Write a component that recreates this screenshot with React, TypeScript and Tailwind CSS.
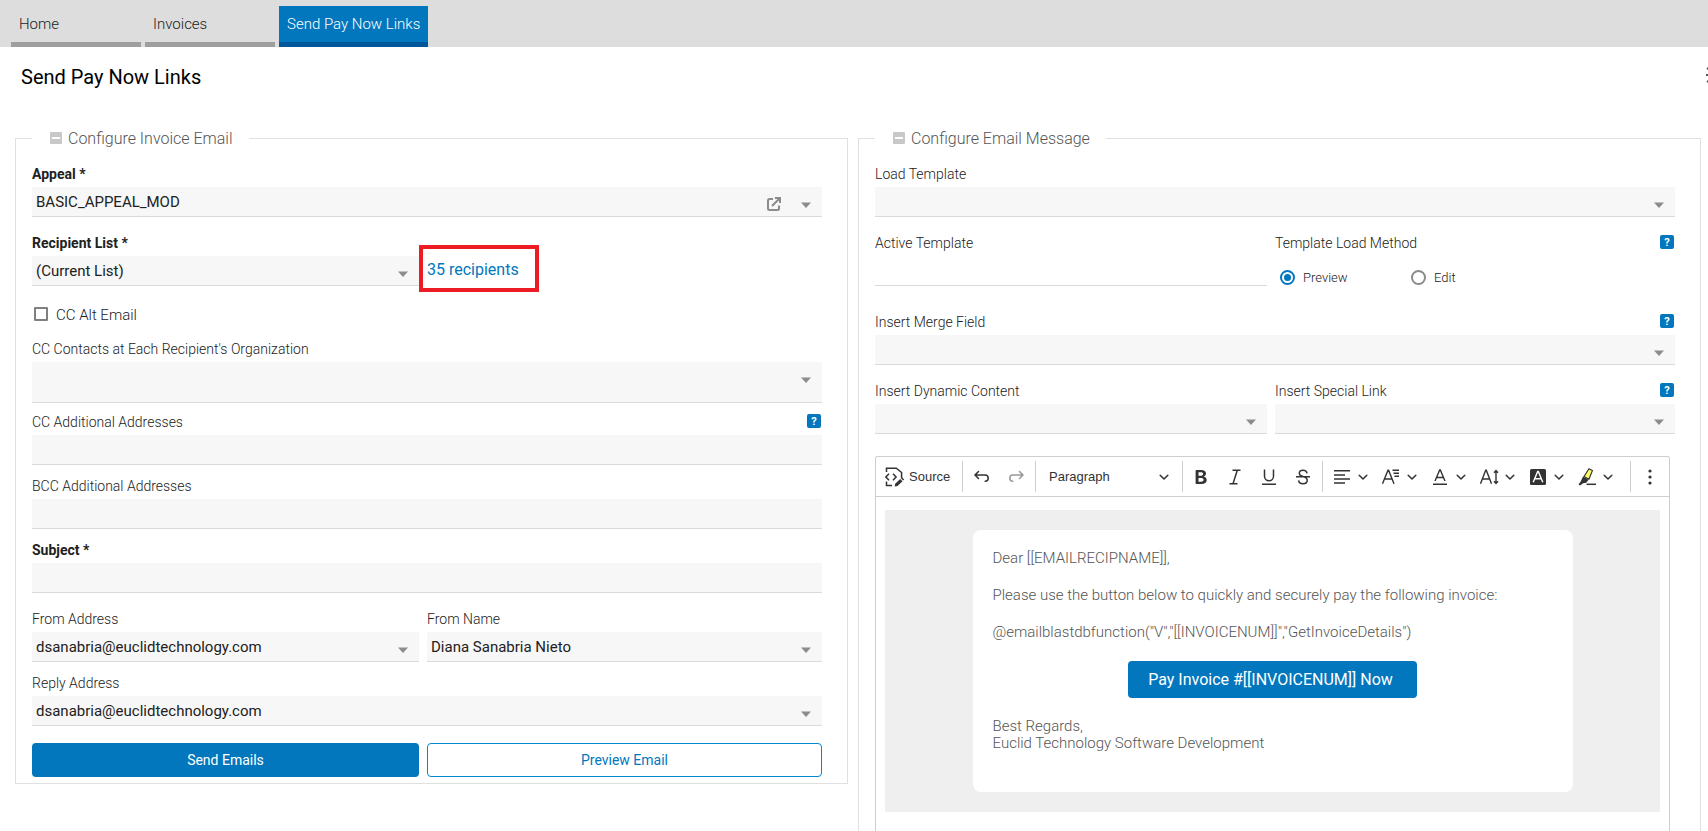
import { useId, useState, type ReactNode } from "react";

function Caret() {
  return (
    <svg viewBox="0 0 10 6" className="pointer-events-none absolute right-[11px] top-[15px] h-1.5 w-2.5" aria-hidden="true">
      <path d="M0 0.5h10L5 6z" fill="#8c8c8c" />
    </svg>
  );
}

function Help({ topic }: { topic: string }) {
  return (
    <button
      type="button"
      aria-label={"Help: " + topic}
      className="mr-px flex h-3.5 w-3.5 items-center justify-center rounded-xs bg-[#0277bd] text-[11px] font-bold leading-none text-white"
    >
      ?
    </button>
  );
}

function Caption({ id, text, bold, help }: { id: string; text: string; bold?: boolean; help?: boolean }) {
  return (
    <div className="flex h-5 items-center justify-between">
      <label htmlFor={id} className={(bold ? "font-bold" : "font-light") + " pt-0.5 text-sm text-[#212121]"}>
        {text}
      </label>
      {help && <Help topic={text} />}
    </div>
  );
}

type FieldProps = { label: string; bold?: boolean; help?: boolean };

function SelectField({ label, bold, help, value = "", tall, action }: FieldProps & { value?: string; tall?: boolean; action?: ReactNode }) {
  const id = useId();
  return (
    <div className="flex min-w-0 flex-col gap-1">
      <Caption id={id} text={label} bold={bold} help={help} />
      <div className="relative">
        <select
          id={id}
          className={
            (tall ? "h-[41px]" : "h-[30px]") +
            " block w-full appearance-none border-b border-[#dadada] bg-[#f7f7f7] px-1 pt-0.5 text-[15px] text-[#212121] outline-none"
          }
        >
          <option>{value}</option>
        </select>
        {action}
        <Caret />
      </div>
    </div>
  );
}

function TextField({ label, bold, help, plain }: FieldProps & { plain?: boolean }) {
  const id = useId();
  return (
    <div className="flex min-w-0 flex-col gap-1">
      <Caption id={id} text={label} bold={bold} help={help} />
      <input
        id={id}
        type="text"
        readOnly={plain}
        className={
          (plain ? "bg-white" : "bg-[#f7f7f7]") +
          " block h-[30px] w-full border-b border-[#dadada] px-1 pt-0.5 text-[15px] text-[#212121] outline-none"
        }
      />
    </div>
  );
}

function PanelLegend({ children }: { children: string }) {
  return (
    <legend className="h-6 pl-[18px] pr-4">
      <button type="button" className="flex h-6 items-center gap-1.5 text-base font-light text-[#555]">
        <svg viewBox="0 0 12 12" className="h-3 w-3" aria-hidden="true">
          <rect width="12" height="12" rx="1" fill="#c8c8c8" />
          <rect x="2" y="5" width="8" height="2" fill="#fff" />
        </svg>
        <span className="pt-0.5">{children}</span>
      </button>
    </legend>
  );
}

function Icon({ children }: { children: ReactNode }) {
  return (
    <svg viewBox="0 0 20 20" className="h-5 w-5 shrink-0" fill="#333" aria-hidden="true">
      {children}
    </svg>
  );
}

function Chevron() {
  return (
    <svg viewBox="0 0 10 10" className="h-2.5 w-2.5 shrink-0" aria-hidden="true">
      <path d="M1.2 3.2 5 7l3.8-3.8" fill="none" stroke="#333" strokeWidth="1.5" strokeLinecap="round" strokeLinejoin="round" />
    </svg>
  );
}

function Tool({ label, children }: { label: string; children: ReactNode }) {
  return (
    <button type="button" aria-label={label} className="flex h-[30px] w-[34px] items-center justify-center">
      {children}
    </button>
  );
}

function DropTool({ label, children }: { label: string; children: ReactNode }) {
  return (
    <button type="button" aria-label={label} className="flex h-[30px] w-[49px] items-center gap-1.5 pl-1.5">
      {children}
      <Chevron />
    </button>
  );
}

function Divider() {
  return <span className="h-[31px] w-px shrink-0 bg-[#ccced1]" />;
}

function Toolbar() {
  return (
    <div role="toolbar" aria-label="Editor toolbar" className="flex h-10 items-center border-b border-[#ccced1] text-[#333]">
      <button type="button" className="flex h-[30px] w-[86px] items-center gap-1 pl-[9px] font-['Liberation_Sans',sans-serif] text-[13px]">
        <Icon>
          <path d="M1.5 5V1.2h9.8L16.6 5.5v5.5" fill="none" stroke="#333" strokeWidth="1.5" />
          <path d="M1.5 14.5v4H7" fill="none" stroke="#333" strokeWidth="1.5" />
          <path d="M4 6.8.9 10 4 13.2M8 6.8 11.1 10 8 13.2" fill="none" stroke="#333" strokeWidth="1.5" />
          <path d="m16.9 10.2 2.3 2.2-1 1.1-2.3-2.3zM15.2 11.9l2.3 2.3-5 4.9-2.8.5.5-2.8z" />
        </Icon>
        Source
      </button>
      <Divider />
      <div className="flex w-[72px] items-center justify-center">
        <Tool label="Undo">
          <Icon>
            <path d="M6.5 4.500 3 8l3.5 3.5M3 8h10a3.2 3.200 0 0 1 3.2 3.200c0 1.700-1.200 3-3 3.100" fill="none" stroke="#333" strokeWidth="1.5" strokeLinecap="round" />
          </Icon>
        </Tool>
        <Tool label="Redo">
          <Icon>
            <path d="M13.5 4.500 17 8l-3.5 3.5M17 8H7a3.200 3.200 0 0 0-3.200 3.200c0 1.700 1.200 3 3 3.100" fill="none" stroke="#999" strokeWidth="1.5" strokeLinecap="round" />
          </Icon>
        </Tool>
      </div>
      <Divider />
      <button type="button" className="flex h-[30px] w-[146px] items-center justify-between px-[13px] font-['Liberation_Sans',sans-serif] text-[13px]">
        Paragraph
        <Chevron />
      </button>
      <Divider />
      <div className="flex w-[139px] items-center pl-px">
        <Tool label="Bold">
          <Icon>
            <path d="M10.200 17H5.300a.7.7 0 0 1-.7-.7V3.700c0-.4.3-.7.7-.7h4.800c3.100 0 4.900 1.400 4.900 3.600 0 1.500-1 2.600-2.300 3 1.800.3 3 1.700 3 3.400 0 2.500-2 4-5.500 4zM7.500 5.300v3.500h2c1.700 0 2.600-.6 2.600-1.800 0-1.100-.8-1.700-2.200-1.700zm0 5.600v3.800h2.400c1.800 0 2.700-.7 2.700-1.900 0-1.300-1-1.900-2.900-1.900z" />
          </Icon>
        </Tool>
        <Tool label="Italic">
          <Icon>
            <path d="M7.500 3.300h8M4.500 16.700h8M12.300 3.300 8 16.700" fill="none" stroke="#333" strokeWidth="1.500" />
          </Icon>
        </Tool>
        <Tool label="Underline">
          <Icon>
            <path d="M5.500 2.500v6.800a4.500 4.500 0 0 0 9 0V2.500M3 17.300h14" fill="none" stroke="#333" strokeWidth="1.500" />
          </Icon>
        </Tool>
        <Tool label="Strikethrough">
          <Icon>
            <path d="M14 6.300C13.700 4.300 12.200 3.200 10 3.200S6.300 4.400 6.300 6.300c0 1.800 1.300 2.700 3.700 3.300 2.800.7 4.200 1.600 4.200 3.700 0 2.200-1.700 3.500-4.200 3.500-2.600 0-4.200-1.300-4.400-3.400M3 9.800h14" fill="none" stroke="#333" strokeWidth="1.500" />
          </Icon>
        </Tool>
      </div>
      <Divider />
      <div className="flex flex-1 items-center pl-[3px]">
        <DropTool label="Text alignment">
          <Icon>
            <path d="M2 3.800h16M2 7.900h11M2 12h16M2 16.100h11" fill="none" stroke="#333" strokeWidth="1.500" />
          </Icon>
        </DropTool>
        <DropTool label="Font family">
          <Icon>
            <path d="M1.500 16.700 7 3.300h.6l5.400 13.400M3.500 12h7.500M11.500 3.300H18M12.500 6.300H18M13.500 9.300H18" fill="none" stroke="#333" strokeWidth="1.400" />
          </Icon>
        </DropTool>
        <DropTool label="Font color">
          <Icon>
            <path d="m5 14 4.700-11h.6L15 14M6.500 10.500h7M3 17.300h14" fill="none" stroke="#333" strokeWidth="1.400" />
          </Icon>
        </DropTool>
        <DropTool label="Font size">
          <Icon>
            <path d="M1.500 16.700 6.700 3.300h.6l5.200 13.400M3.500 12h7M17 4v12M15 5.800l2-2.300 2 2.300M15 14.200l2 2.300 2-2.300" fill="none" stroke="#333" strokeWidth="1.400" />
          </Icon>
        </DropTool>
        <DropTool label="Font background color">
          <Icon>
            <rect x="2" y="2" width="16" height="16" rx="1.500" />
            <path d="M5.200 15.300 9.700 4.500h.6l4.500 10.800M6.700 11.800h6.600" fill="none" stroke="#fff" strokeWidth="1.400" />
          </Icon>
        </DropTool>
        <DropTool label="Highlight">
          <Icon>
            <path d="m7 9.500 5-7.800 3.400 1.900-3.500 8.700z" fill="#fdfd66" stroke="#333" strokeWidth="1.200" strokeLinejoin="round" />
            <path d="m6 9.500 5.600 3.200-2.400 3.100-3 .4-3.200 2.400-1.500-1 2.200-3z" />
            <path d="M9.500 17.300h9.500" stroke="#333" strokeWidth="1.500" />
          </Icon>
        </DropTool>
      </div>
      <Divider />
      <button type="button" aria-label="Show more items" className="flex h-[30px] w-[38px] items-center justify-center">
        <Icon>
          <circle cx="10" cy="4" r="1.600" />
          <circle cx="10" cy="10" r="1.600" />
          <circle cx="10" cy="16" r="1.600" />
        </Icon>
      </button>
    </div>
  );
}

function LoadMethod() {
  const [method, setMethod] = useState("Preview");
  return (
    <div role="radiogroup" aria-label="Template Load Method" className="flex min-w-0 flex-col gap-1">
      <div className="flex h-5 items-center justify-between text-sm font-light text-[#212121]">
        <span className="pt-0.5">Template Load Method</span>
        <Help topic="Template Load Method" />
      </div>
      <div className="flex h-[42px] items-center pl-[5px]">
        {["Preview", "Edit"].map((name) => (
          <label key={name} className="flex w-[131px] items-center gap-2 text-[13px] font-light text-[#212121]">
            <input
              type="radio"
              name="load-method"
              checked={method === name}
              onChange={() => setMethod(name)}
              className="h-[15px] w-[15px] appearance-none rounded-full border-2 border-[#8a8a8a] p-0.5 checked:border-[#0277bd] checked:bg-[#0277bd] checked:bg-clip-content"
            />
            <span className="pt-0.5">{name}</span>
          </label>
        ))}
      </div>
    </div>
  );
}

export default function App() {
  return (
    <div className="flex h-screen flex-col overflow-hidden bg-white font-[Roboto,sans-serif]">
      <nav className="flex h-[47px] shrink-0 items-end gap-1 bg-[#ddd] pl-[11px] text-[15px] font-light">
        <a href="#home" className="flex h-[41px] w-[130px] items-center border-b-[5px] border-[#9e9e9e] px-2 text-[#212121]">
          Home
        </a>
        <a href="#invoices" className="flex h-[41px] w-[130px] items-center border-b-[5px] border-[#9e9e9e] px-2 text-[#212121]">
          Invoices
        </a>
        <a href="#send" aria-current="page" className="flex h-[41px] items-center border-b-[5px] border-[#01579b] bg-[#0277bd] px-2 text-white">
          Send Pay Now Links
        </a>
      </nav>

      <header className="flex h-[79px] shrink-0 items-start justify-between overflow-hidden pl-[21px] pt-4">
        <h1 className="text-xl leading-7 text-black">Send Pay Now Links</h1>
        <button type="button" aria-label="Page settings" className="-mr-4 mt-[3px] h-[18px] w-[18px]">
          <svg viewBox="0 0 18 18" fill="none" stroke="#555" strokeWidth="2" aria-hidden="true">
            <circle cx="9" cy="9" r="5" />
            <path d="M0 9h4M14 9h4M9 0v4M9 14v4M1 2l4 3M13 13l3 3M1 16l4-3M13 5l3-3" />
          </svg>
        </button>
      </header>

      <main className="grid min-h-0 flex-1 grid-cols-[833fr_843fr] gap-2.5 pl-[15px] pr-[7px]">
        <fieldset className="min-w-0 self-start border border-[#e0e0e0] pb-1.5 pl-4 pr-[25px] pt-[13px]">
          <PanelLegend>Configure Invoice Email</PanelLegend>
          <div className="flex flex-col gap-[15px]">
            <SelectField
              label="Appeal *"
              bold
              value="BASIC_APPEAL_MOD"
              action={
                <button type="button" aria-label="Open appeal" className="absolute right-[41px] top-2.5 h-3.5 w-3.5">
                  <svg viewBox="0 0 14 14" fill="none" stroke="#8c8c8c" strokeWidth="2" aria-hidden="true">
                    <path d="M6 2H2.500A1.500 1.500 0 0 0 1 3.500v8A1.500 1.500 0 0 0 2.500 13h8a1.500 1.500 0 0 0 1.500-1.500V8.500M5 9l7.500-7.500M8 1h5v5" />
                  </svg>
                </button>
              }
            />
            <div className="grid grid-cols-[387fr_395fr] gap-2">
              <SelectField label="Recipient List *" bold value="(Current List)" />
              <div className="flex items-end">
                <a
                  href="#recipients"
                  className="-mb-1.5 -ml-2 flex h-[47px] w-[120px] items-center border-4 border-[#ed1c24] pl-1 pt-0.5 text-base text-[#0277bd]"
                >
                  35 recipients
                </a>
              </div>
            </div>
          </div>
          <label className="mb-3.5 mt-[18px] flex h-5 items-center gap-2 pl-0.5 text-[15px] font-light text-[#212121]">
            <input type="checkbox" className="h-3.5 w-3.5 appearance-none rounded-[1px] border-2 border-[#808080] checked:bg-[#0277bd]" />
            <span className="pt-0.5">CC Alt Email</span>
          </label>
          <div className="flex flex-col gap-2">
            <SelectField label="CC Contacts at Each Recipient's Organization" tall />
            <div className="flex flex-col gap-2.5">
              <TextField label="CC Additional Addresses" help />
              <TextField label="BCC Additional Addresses" />
              <TextField label="Subject *" bold />
            </div>
          </div>
          <div className="mt-[15px] flex flex-col gap-2.5">
            <div className="grid grid-cols-[387fr_395fr] gap-2">
              <SelectField label="From Address" value="dsanabria@euclidtechnology.com" />
              <SelectField label="From Name" value="Diana Sanabria Nieto" />
            </div>
            <SelectField label="Reply Address" value="dsanabria@euclidtechnology.com" />
          </div>
          <div className="mt-[17px] grid grid-cols-[387fr_395fr] gap-2 text-sm">
            <button type="button" className="h-[34px] rounded bg-[#0277bd] text-white">
              Send Emails
            </button>
            <button type="button" className="h-[34px] rounded border border-[#0288d1] bg-white text-[#0277bd]">
              Preview Email
            </button>
          </div>
        </fieldset>

        <fieldset className="min-w-0 border border-b-0 border-[#e0e0e0] pl-4 pr-[25px] pt-[13px]">
          <PanelLegend>Configure Email Message</PanelLegend>
          <div className="flex flex-col gap-[15px]">
            <SelectField label="Load Template" />
            <div className="grid h-16 grid-cols-[392fr_400fr] gap-2">
              <TextField label="Active Template" plain />
              <LoadMethod />
            </div>
            <SelectField label="Insert Merge Field" help />
            <div className="grid grid-cols-[392fr_400fr] gap-2">
              <SelectField label="Insert Dynamic Content" />
              <SelectField label="Insert Special Link" help />
            </div>
          </div>
          <div className="mr-[5px] mt-[22px] min-h-[400px] rounded-t-xs border border-[#ccced1]">
            <Toolbar />
            <div className="mx-[9px] mt-[13px] bg-[#efefef] py-5">
              <div className="mx-auto flex h-[262px] max-w-[600px] flex-col rounded-lg bg-white p-5 text-[15px] font-light leading-[17px] text-[#555]">
                <p className="mb-5">Dear [[EMAILRECIPNAME]],</p>
                <p className="mb-5">Please use the button below to quickly and securely pay the following invoice:</p>
                <p className="mb-5">@emailblastdbfunction("V","[[INVOICENUM]]","GetInvoiceDetails")</p>
                <a href="#pay" className="mb-5 flex h-[37px] items-center self-center rounded bg-[#0277bd] pl-5 pr-6 text-base font-normal text-white">
                  Pay Invoice #[[INVOICENUM]] Now
                </a>
                <p>
                  Best Regards,
                  <br />
                  Euclid Technology Software Development
                </p>
              </div>
            </div>
          </div>
        </fieldset>
      </main>
    </div>
  );
}
